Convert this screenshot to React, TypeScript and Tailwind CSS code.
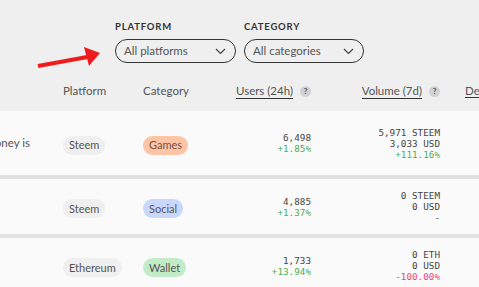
import React from "react";

const sans = { fontFamily: 'Lato, "Noto Sans", sans-serif' };
const mono = { fontFamily: '"DejaVu Sans Mono", "Liberation Mono", monospace' };

function Chevron() {
  return (
    <svg width="11" height="7" viewBox="0 0 11 7" fill="none">
      <path d="M1 1l4.5 4.5L10 1" stroke="#444" strokeWidth="1.2" />
    </svg>
  );
}

function Filter({ label, value, width }: { label: string; value: string; width: string }) {
  return (
    <div className="flex flex-col">
      <div className="text-[9.5px] leading-[12px] font-bold tracking-[0.8px] text-[#333]">{label}</div>
      <div
        className={`mt-[6px] h-[24px] ${width} rounded-full border border-[#333] flex items-center justify-between pl-[8px] pr-[9px] text-[11.5px] text-[#555]`}
      >
        <span>{value}</span>
        <Chevron />
      </div>
    </div>
  );
}

function Help() {
  return (
    <span className="ml-[7px] inline-flex w-[11px] h-[11px] rounded-full bg-[#d2d2d2] items-center justify-center text-[8px] font-bold text-[#555] leading-none">
      ?
    </span>
  );
}

function Pill({ text, cls }: { text: string; cls: string }) {
  return (
    <span className={`inline-flex h-[19px] items-center rounded-full px-[6px] text-[11px] ${cls}`}>{text}</span>
  );
}

type Row = {
  h: string;
  desc?: string;
  platform: string;
  cat: string;
  catCls: string;
  users: string;
  uchg: string;
  vol: string[];
  vchg: string;
  vchgCls: string;
};

const rows: Row[] = [
  {
    h: "h-[64px]",
    desc: "Earn money is",
    platform: "Steem",
    cat: "Games",
    catCls: "bg-[#fdc4a6] text-[#7a5040]",
    users: "6,498",
    uchg: "+1.85%",
    vol: ["5,971 STEEM", "3,033 USD"],
    vchg: "+111.16%",
    vchgCls: "text-[#4caf50]",
  },
  {
    h: "h-[55px]",
    platform: "Steem",
    cat: "Social",
    catCls: "bg-[#c8d7fb] text-[#555]",
    users: "4,885",
    uchg: "+1.37%",
    vol: ["0 STEEM", "0 USD"],
    vchg: "-",
    vchgCls: "text-[#555]",
  },
  {
    h: "h-[55px]",
    platform: "Ethereum",
    cat: "Wallet",
    catCls: "bg-[#c2ecc8] text-[#555]",
    users: "1,733",
    uchg: "+13.94%",
    vol: ["0 ETH", "0 USD"],
    vchg: "-100.00%",
    vchgCls: "text-[#e8457a]",
  },
];

export default function App() {
  return (
    <div className="relative w-[479px] h-[287px] overflow-hidden bg-[#efefef]" style={sans}>
      <div className="flex gap-[8px] pl-[115px] pt-[21px]">
        <Filter label="PLATFORM" value="All platforms" width="w-[121px]" />
        <Filter label="CATEGORY" value="All categories" width="w-[120px]" />
      </div>

      <div className="mt-[16px] flex h-[24px] items-center text-[11.5px] text-[#555]">
        <div className="w-[63px] shrink-0" />
        <div className="w-[80px] shrink-0">Platform</div>
        <div className="w-[85px] shrink-0">Category</div>
        <div className="w-[83px] shrink-0 flex justify-end items-center">
          <span className="border-b border-[#333] leading-[14px]">Users (24h)</span>
          <Help />
        </div>
        <div className="w-[129px] shrink-0 flex justify-end items-center">
          <span className="border-b border-[#333] leading-[14px]">Volume (7d)</span>
          <Help />
        </div>
        <div className="pl-[25px] shrink-0">
          <span className="border-b border-[#333] leading-[14px]">Developer</span>
        </div>
      </div>

      <div className="mt-[8px] flex flex-col gap-[4px] bg-[#e1e1e1]">
        {rows.map((r, i) => (
          <div key={i} className={`${r.h} shrink-0 flex items-center bg-[#fafafa]`}>
            <div className="w-[63px] shrink-0 overflow-hidden flex justify-end pr-[33px] text-[11.5px] text-[#555] whitespace-nowrap">
              {r.desc ?? ""}
            </div>
            <div className="w-[80px] shrink-0">
              <Pill text={r.platform} cls="bg-[#efefef] text-[#555]" />
            </div>
            <div className="w-[85px] shrink-0">
              <Pill text={r.cat} cls={r.catCls} />
            </div>
            <div className="w-[83px] shrink-0 flex flex-col items-end text-[9.3px] leading-[11px]" style={mono}>
              <span className="text-[#444]">{r.users}</span>
              <span className="text-[#4caf50]">{r.uchg}</span>
            </div>
            <div className="w-[129px] shrink-0 flex flex-col items-end text-[9.3px] leading-[11px]" style={mono}>
              {r.vol.map((v) => (
                <span key={v} className="text-[#444]">{v}</span>
              ))}
              <span className={r.vchgCls}>{r.vchg}</span>
            </div>
          </div>
        ))}
      </div>

      <svg className="absolute left-0 top-0 pointer-events-none" width="479" height="287">
        <line x1="38" y1="66" x2="90" y2="56.5" stroke="#ee1c1c" strokeWidth="4" />
        <polygon points="100,53 84,47 89,66" fill="#ee1c1c" />
      </svg>
    </div>
  );
}
